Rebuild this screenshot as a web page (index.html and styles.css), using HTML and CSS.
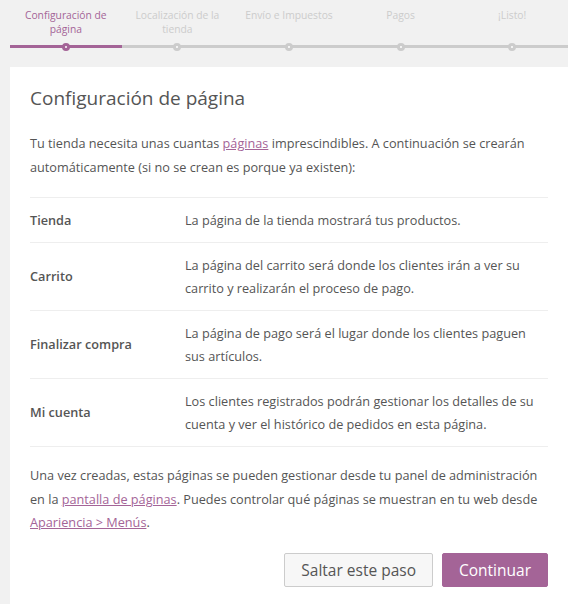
FILE: index.html
```html
<!DOCTYPE html>
<html lang="es">
<head>
<meta charset="utf-8">
<title>Configuración de página</title>
<link rel="stylesheet" href="styles.css">
</head>
<body>
<div class="wrap">
  <ol class="steps">
    <li class="step active">Configuración de página</li>
    <li class="step">Localización de la tienda</li>
    <li class="step">Envío e Impuestos</li>
    <li class="step">Pagos</li>
    <li class="step">¡Listo!</li>
  </ol>
  <div class="card">
    <h1 class="title">Configuración de página</h1>
    <p class="text">Tu tienda necesita unas cuantas <a href="#" class="link">páginas</a> imprescindibles. A continuación se crearán automáticamente (si no se crean es porque ya existen):</p>
    <table class="pages">
      <tr>
        <th class="label">Tienda</th>
        <td class="desc">La página de la tienda mostrará tus productos.</td>
      </tr>
      <tr>
        <th class="label">Carrito</th>
        <td class="desc">La página del carrito será donde los clientes irán a ver su carrito y realizarán el proceso de pago.</td>
      </tr>
      <tr>
        <th class="label">Finalizar compra</th>
        <td class="desc">La página de pago será el lugar donde los clientes paguen sus artículos.</td>
      </tr>
      <tr>
        <th class="label">Mi cuenta</th>
        <td class="desc">Los clientes registrados podrán gestionar los detalles de su cuenta y ver el histórico de pedidos en esta página.</td>
      </tr>
    </table>
    <p class="text note">Una vez creadas, estas páginas se pueden gestionar desde tu panel de administración en la <a href="#" class="link">pantalla de páginas</a>. Puedes controlar qué páginas se muestran en tu web desde <a href="#" class="link">Apariencia &gt; Menús</a>.</p>
    <div class="actions">
      <button class="btn btn-secondary">Saltar este paso</button>
      <button class="btn btn-primary">Continuar</button>
    </div>
  </div>
</div>
</body>
</html>
```
FILE: styles.css
```css
html, body {
  margin: 0;
  padding: 0;
  background: #f1f1f1;
  overflow: hidden;
}
body {
  font-family: "Open Sans", "Noto Sans", sans-serif;
  color: #555;
}
.wrap {
  padding-left: 10px;
  width: 558px;
}
.steps {
  list-style: none;
  margin: 0;
  padding: 0;
  display: flex;
}
.step {
  flex: 1 1 0;
  position: relative;
  text-align: center;
  font-size: 10.3px;
  line-height: 14px;
  color: #ccc;
  padding: 8px 4px 9px;
  border-bottom: 3px solid #ccc;
}
.step::after {
  content: "";
  position: absolute;
  left: 50%;
  bottom: -5.5px;
  width: 2px;
  height: 2px;
  margin-left: -4px;
  border: 3px solid #ccc;
  border-radius: 50%;
  background: #fff;
}
.step.active {
  color: #a46497;
  border-bottom-color: #a46497;
}
.step.active::after {
  border-color: #a46497;
}
.card {
  margin-top: 19px;
  background: #fff;
  padding: 20px 20px 30px;
}
.title {
  margin: 0 0 21px;
  font-size: 19px;
  line-height: 23px;
  font-weight: 400;
  color: #555;
}
.text {
  margin: 0;
  font-size: 12.7px;
  line-height: 24px;
  color: #555;
}
.link {
  color: #a46497;
  text-decoration: underline;
}
.pages {
  margin-top: 18px;
  width: 100%;
  border-collapse: collapse;
  font-size: 12.7px;
  line-height: 23px;
}
.pages tr {
  border-top: 1px solid #eee;
  border-bottom: 1px solid #eee;
}
.label {
  text-align: left;
  font-weight: 600;
  width: 155px;
  padding: 10.5px 0;
  vertical-align: middle;
}
.desc {
  padding: 10.5px 0;
}
.note {
  margin-top: 17px;
  line-height: 23.5px;
}
.actions {
  margin-top: 18px;
  display: flex;
  justify-content: flex-end;
  gap: 9px;
}
.btn {
  font-family: "Open Sans", "Noto Sans", sans-serif;
  font-size: 15.5px;
  height: 34px;
  padding: 0 16px;
  border-radius: 2px;
  cursor: pointer;
}
.btn-secondary {
  background: #f7f7f7;
  border: 1px solid #ccc;
  color: #555;
}
.btn-primary {
  background: #a46497;
  border: 1px solid #a46497;
  color: #fff;
}
```
